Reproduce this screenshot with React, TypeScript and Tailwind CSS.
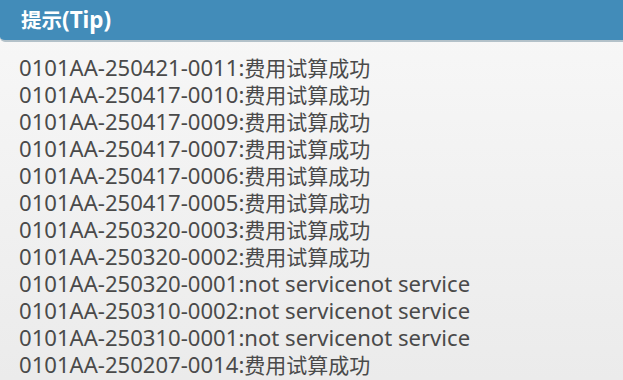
import React from "react";

const rows: [string, string][] = [
  ["0101AA-250421-0011:", "费用试算成功"],
  ["0101AA-250417-0010:", "费用试算成功"],
  ["0101AA-250417-0009:", "费用试算成功"],
  ["0101AA-250417-0007:", "费用试算成功"],
  ["0101AA-250417-0006:", "费用试算成功"],
  ["0101AA-250417-0005:", "费用试算成功"],
  ["0101AA-250320-0003:", "费用试算成功"],
  ["0101AA-250320-0002:", "费用试算成功"],
  ["0101AA-250320-0001:not servicenot service", ""],
  ["0101AA-250310-0002:not servicenot service", ""],
  ["0101AA-250310-0001:not servicenot service", ""],
  ["0101AA-250207-0014:", "费用试算成功"],
];

export default function App() {
  return (
    <div
      className="w-[623px] h-[380px] overflow-hidden flex flex-col bg-gradient-to-b from-[#f8f8f8] to-[#ebebeb]"
      style={{ fontFamily: '"Noto Sans", "Noto Sans CJK SC", sans-serif' }}
    >
      <div className="h-[42px] shrink-0 bg-[#428cb9] rounded-bl-[5px] border-b-2 border-[#b3c1c9] flex items-center pl-[21px]">
        <span className="text-white font-bold leading-none">
          <span className="text-[20.5px]">提示</span>
          <span className="text-[22.5px]">(Tip)</span>
        </span>
      </div>
      <div className="flex flex-col pl-[19px] pt-[12px] text-[#4a4a4a] text-[22.1px] leading-[27px]">
        {rows.map(([a, b], i) => (
          <div key={i} className="whitespace-nowrap h-[27px] shrink-0">
            {a}
            {b && <span className="text-[21px]">{b}</span>}
          </div>
        ))}
      </div>
    </div>
  );
}
